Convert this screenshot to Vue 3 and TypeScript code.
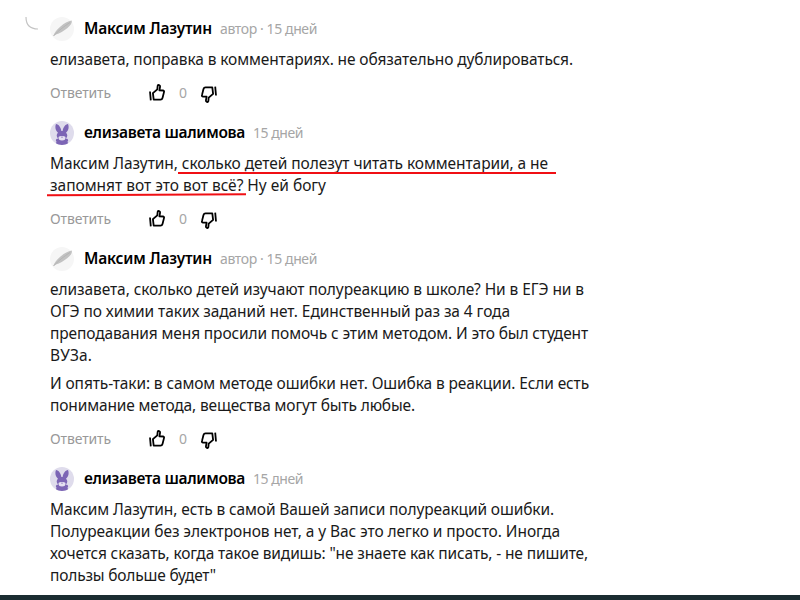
<script setup lang="ts">
import { nextTick, onMounted, ref } from 'vue'

interface Line { text: string; width: number }
interface Comment {
  author: string
  nameWidth: number
  meta: string
  metaWidth: number
  avatar: 'feather' | 'rabbit'
  paragraphs: Line[][]
  marked?: boolean
  actions: boolean
}

const maxim = { author: 'Максим Лазутин', nameWidth: 128, meta: 'автор · 15 дней', metaWidth: 97, avatar: 'feather' as const }
const liza = { author: 'елизавета шалимова', nameWidth: 161, meta: '15 дней', metaWidth: 50, avatar: 'rabbit' as const }

const comments: Comment[] = [
  {
    ...maxim,
    paragraphs: [[{ text: 'елизавета, поправка в комментариях. не обязательно дублироваться.', width: 523 }]],
    actions: true,
  },
  {
    ...liza,
    paragraphs: [[
      { text: 'Максим Лазутин, сколько детей полезут читать комментарии, а не', width: 498 },
      { text: 'запомнят вот это вот всё? Ну ей богу', width: 276 },
    ]],
    marked: true,
    actions: true,
  },
  {
    ...maxim,
    paragraphs: [
      [
        { text: 'елизавета, сколько детей изучают полуреакцию в школе? Ни в ЕГЭ ни в', width: 534 },
        { text: 'ОГЭ по химии таких заданий нет. Единственный раз за 4 года', width: 460 },
        { text: 'преподавания меня просили помочь с этим методом. И это был студент', width: 538 },
        { text: 'ВУЗа.', width: 42 },
      ],
      [
        { text: 'И опять-таки: в самом методе ошибки нет. Ошибка в реакции. Если есть', width: 539 },
        { text: 'понимание метода, вещества могут быть любые.', width: 365 },
      ],
    ],
    actions: true,
  },
  {
    ...liza,
    paragraphs: [[
      { text: 'Максим Лазутин, есть в самой Вашей записи полуреакций ошибки.', width: 504 },
      { text: 'Полуреакции без электронов нет, а у Вас это легко и просто. Иногда', width: 510 },
      { text: 'хочется сказать, когда такое видишь: "не знаете как писать, - не пишите,', width: 538 },
      { text: 'пользы больше будет"', width: 166 },
    ]],
    actions: false,
  },
]

// Tracks every line out to its typeset width.
const root = ref<HTMLElement | null>(null)
function fit() {
  root.value?.querySelectorAll<HTMLElement>('[data-width]').forEach((el) => {
    el.style.letterSpacing = '0px'
    const spare = Number(el.dataset.width) - el.getBoundingClientRect().width
    el.style.letterSpacing = `${spare / (el.textContent ?? ' ').length}px`
  })
}
onMounted(async () => {
  await nextTick()
  fit()
  document.fonts.ready.then(fit)
})
</script>

<template>
  <main ref="root" class="page">
    <svg class="branch" viewBox="0 0 14 14"><path d="M1 0C1 8 5 12 13 12" /></svg>
    <article v-for="(c, i) in comments" :key="i" class="comment">
      <header class="head">
        <svg v-if="c.avatar === 'feather'" class="avatar" viewBox="0 0 24 24">
          <circle cx="12" cy="12" r="12" fill="#f6f6f6" />
          <path d="M3.200 19.300C4.500 15.500 7 12.300 10.500 9.500C14 6.500 18 4.300 21.800 3.600C22.300 6 20.500 8.600 17.500 11C14 13.800 9.500 16.500 6 17.400Z" fill="#c2c2c2" />
          <path d="M3.500 19C9 13 14 9.500 20 5.500" stroke="#b0b0b0" stroke-width=".8" fill="none" />
        </svg>
        <svg v-else class="avatar" viewBox="0 0 24 24">
          <circle cx="12" cy="12" r="12" fill="#dfdcec" />
          <path d="M6 3C8.800 3.200 10.700 6.200 11.400 10H12.600C13.300 6.200 15.200 3.200 18 3C19.400 6.500 18.300 9.800 16 11.700C17.500 13 17.600 14.600 16.800 16.300L15.800 17.800C18 17.500 18.800 19.300 17.500 20.500L18 22.300C14.500 24.400 9.500 24.400 6 22.300L6.500 20.500C5.200 19.300 6 17.500 8.200 17.800L7.200 16.300C6.400 14.600 6.500 13 8 11.700C5.700 9.800 4.600 6.500 6 3Z" fill="#7c65b5" />
          <path d="M8.500 16C10 14.800 14 14.800 15.500 16C15.800 18.500 14.500 19.500 12 19.500S8.200 18.500 8.500 16Z" fill="#e4e0f0" />
          <path d="M11 15.800H13L12 17.100Z" fill="#7c65b5" />
        </svg>
        <span class="name" :data-width="c.nameWidth">{{ c.author }}</span>
        <span class="meta" :data-width="c.metaWidth">{{ c.meta }}</span>
      </header>
      <div class="body">
        <p v-for="(p, j) in c.paragraphs" :key="j" class="para">
          <span v-for="(l, k) in p" :key="k" class="row"><span :data-width="l.width">{{ l.text }}</span></span>
        </p>
        <svg v-if="c.marked" class="marks" viewBox="0 0 520 50">
          <path d="M131 21H509" />
          <path d="M0 43.200L60 43L199 42.200" />
        </svg>
      </div>
      <footer v-if="c.actions" class="actions">
        <span class="reply" data-width="61">Ответить</span>
        <svg class="thumb" viewBox="0 0 18 20">
          <path d="M2 8.500L2.800 17.300M5.700 16.700L4.900 10.200L9.300 6.300L9.700 2.700C10.100 1.500 12.300 2.100 12.100 3.600L11.400 7.300L15.400 7.500C16.100 7.700 16.200 8.400 16 9.100L14.500 15C14.200 16.200 13.500 16.700 12.500 16.700Z" />
        </svg>
        <span class="count">0</span>
        <svg class="thumb down" viewBox="0 0 18 20">
          <path d="M2 8.500L2.800 17.300M5.700 16.700L4.900 10.200L9.300 6.300L9.700 2.700C10.100 1.500 12.300 2.100 12.100 3.600L11.400 7.300L15.400 7.500C16.100 7.700 16.200 8.400 16 9.100L14.500 15C14.200 16.200 13.500 16.700 12.500 16.700Z" />
        </svg>
      </footer>
    </article>
    <div class="edge"></div>
  </main>
</template>

<style>
body { background: #fff; }
</style>

<style scoped>
.page {
  position: relative;
  box-sizing: border-box;
  width: 800px;
  height: 600px;
  padding: 17px 0 0 50px;
  overflow: hidden;
  display: flex;
  flex-direction: column;
  background: #fff;
  color: #000;
  font-family: "Noto Sans", "Open Sans", sans-serif;
}
.branch { position: absolute; left: 25px; top: 17px; width: 14px; height: 14px; }
.branch path { fill: none; stroke: #c4c4c4; stroke-width: 1.2; }
.comment { margin-bottom: 16px; }
.comment:last-of-type { margin-bottom: 0; }
.head { display: flex; align-items: center; height: 24px; white-space: nowrap; }
.avatar { width: 24px; height: 24px; margin-right: 10px; flex: none; }
.name { font-size: 15.500px; font-weight: 600; line-height: 24px; margin-right: 8px; padding-bottom: 2px; }
.meta { font-size: 14px; line-height: 24px; color: #a6a6a6; }
.body { position: relative; margin-top: 7px; }
.para { margin: 0; font-size: 15.500px; line-height: 22px; color: #1a1a1a; }
.para + .para { margin-top: 6px; }
.row { display: block; height: 22px; white-space: nowrap; }
.marks { position: absolute; left: -3px; top: 0; width: 520px; height: 50px; }
.marks path { fill: none; stroke: #f00f14; stroke-width: 2; }
.actions { display: flex; align-items: center; height: 24px; margin-top: 11px; }
.reply { font-size: 14px; color: #999; white-space: nowrap; padding-bottom: 2px; }
.thumb { width: 18px; height: 20px; margin-left: 37px; flex: none; }
.thumb path { fill: none; stroke: #000; stroke-width: 1.800; stroke-linejoin: round; }
.count { width: 8px; margin-left: 13px; font-size: 14px; color: #a6a6a6; padding-bottom: 2px; }
.down { margin-left: 13px; transform: translateY(1px) rotate(180deg); }
.edge { margin: auto 0 0 -50px; height: 5px; background: #1b2d31; flex: none; }
</style>
